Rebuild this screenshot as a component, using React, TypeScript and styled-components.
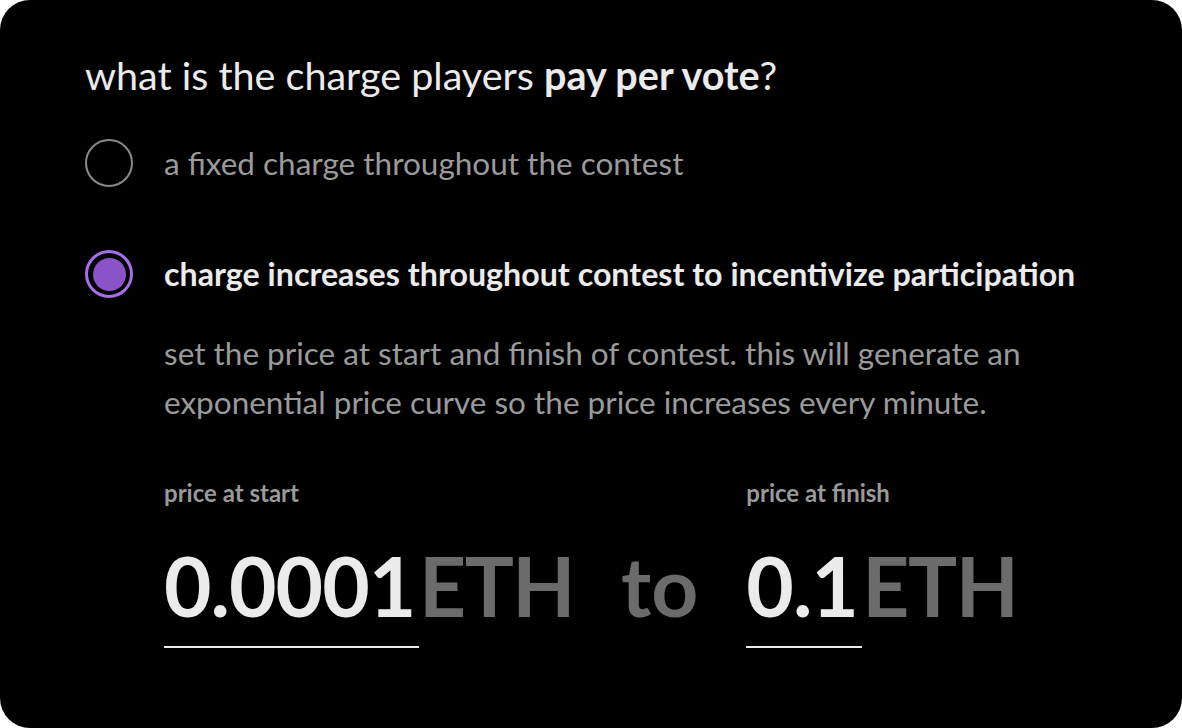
import styled, { createGlobalStyle } from "styled-components";

const GlobalStyle = createGlobalStyle`
  html, body {
    margin: 0;
    padding: 0;
    background: #ffffff;
  }
  body {
    font-family: Lato, "Noto Sans", sans-serif;
  }
`;

type Option = {
  id: string;
  label: string;
  selected: boolean;
};

const options: Option[] = [
  { id: "fixed", label: "a fixed charge throughout the contest", selected: false },
  {
    id: "increase",
    label: "charge increases throughout contest to incentivize participation",
    selected: true,
  },
];

const App = () => {
  return (
    <>
      <GlobalStyle />
      <Card>
        <Title>
          what is the charge players <strong>pay per vote</strong>?
        </Title>
        <OptionList>
          {options.map((option) => (
            <OptionItem key={option.id}>
              <OptionRow>
                <Radio $selected={option.selected}>
                  {option.selected && <RadioDot />}
                </Radio>
                <OptionLabel $selected={option.selected}>{option.label}</OptionLabel>
              </OptionRow>
              {option.selected && (
                <OptionDetails>
                  <Description>
                    set the price at start and finish of contest. this will generate an
                    exponential price curve so the price increases every minute.
                  </Description>
                  <PriceGrid>
                    <FieldLabel>price at start</FieldLabel>
                    <span />
                    <FieldLabel>price at finish</FieldLabel>
                    <PriceValue>
                      <Amount $width={255}>0.0001</Amount>
                      <Unit>ETH</Unit>
                    </PriceValue>
                    <Separator>to</Separator>
                    <PriceValue>
                      <Amount $width={116}>0.1</Amount>
                      <Unit>ETH</Unit>
                    </PriceValue>
                  </PriceGrid>
                </OptionDetails>
              )}
            </OptionItem>
          ))}
        </OptionList>
      </Card>
    </>
  );
};

export default App;

const Card = styled.div`
  box-sizing: border-box;
  width: 1182px;
  height: 728px;
  background: #000000;
  border-radius: 30px;
  padding: 51px 0 0 85px;
  color: #ebebeb;
`;

const Title = styled.h1`
  margin: 0;
  font-size: 39.5px;
  font-weight: 400;
  line-height: 48px;
  color: #ebebeb;

  strong {
    font-weight: 700;
  }
`;

const OptionList = styled.div`
  display: flex;
  flex-direction: column;
  gap: 63px;
  margin-top: 40px;
`;

const OptionItem = styled.div`
  display: flex;
  flex-direction: column;
`;

const OptionRow = styled.div`
  display: flex;
  align-items: center;
  gap: 31px;
  height: 48px;
`;

const Radio = styled.div<{ $selected: boolean }>`
  box-sizing: border-box;
  width: 48px;
  height: 48px;
  border-radius: 50%;
  border: ${(p) => (p.$selected ? "3.5px solid #a66fe8" : "2px solid #8a8a8a")};
  display: flex;
  align-items: center;
  justify-content: center;
  flex-shrink: 0;
`;

const RadioDot = styled.div`
  width: 33px;
  height: 33px;
  border-radius: 50%;
  background: #8a53c8;
`;

const OptionLabel = styled.span<{ $selected: boolean }>`
  font-size: ${(p) => (p.$selected ? "32.2px" : "31.5px")};
  line-height: 40px;
  font-weight: ${(p) => (p.$selected ? 700 : 400)};
  color: ${(p) => (p.$selected ? "#ebebeb" : "#9a9a9a")};
  white-space: nowrap;
`;

const OptionDetails = styled.div`
  padding-left: 79px;
  margin-top: 31px;
`;

const Description = styled.p`
  margin: 0;
  width: 900px;
  font-size: 31.5px;
  line-height: 49px;
  color: #9a9a9a;
`;

const PriceGrid = styled.div`
  display: grid;
  grid-template-columns: auto auto auto;
  justify-content: start;
  margin-top: 52px;
`;

const FieldLabel = styled.span`
  font-size: 24px;
  font-weight: 700;
  line-height: 28px;
  color: #9a9a9a;
`;

const PriceValue = styled.div`
  display: flex;
  align-items: flex-start;
  margin-top: 28px;
`;

const Amount = styled.span<{ $width: number }>`
  box-sizing: border-box;
  width: ${(p) => p.$width}px;
  padding-bottom: 11px;
  font-size: 82px;
  font-weight: 700;
  line-height: 100px;
  color: #ebebeb;
  letter-spacing: -1px;
  border-bottom: 2px solid #ebebeb;
`;

const Unit = styled.span`
  font-size: 82px;
  font-weight: 700;
  line-height: 100px;
  letter-spacing: -1.5px;
  color: #6b6b6b;
`;

const Separator = styled.span`
  align-self: start;
  margin: 28px 48px 0 47px;
  font-size: 82px;
  font-weight: 700;
  line-height: 100px;
  color: #6b6b6b;
`;
